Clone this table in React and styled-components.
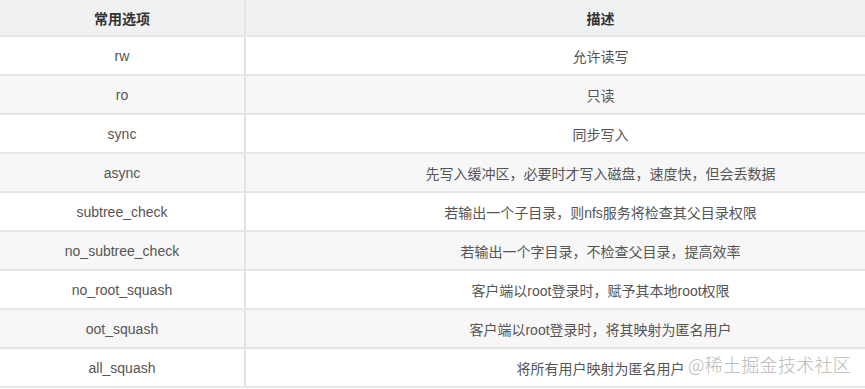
import React from "react";
import styled, { createGlobalStyle } from "styled-components";

const GlobalStyle = createGlobalStyle`
  html, body { margin: 0; padding: 0; background: #ffffff; }
  body { overflow: hidden; }
  * { box-sizing: border-box; }
`;

const Frame = styled.div`
  position: relative;
  width: 865px;
  height: 389px;
  overflow: hidden;
  background: #ffffff;
  font-family: "Liberation Sans", Arial, "Noto Sans CJK SC", sans-serif;
`;

const Table = styled.div`
  width: 955px;
  display: flex;
  flex-direction: column;
`;

const Row = styled.div`
  display: grid;
  grid-template-columns: 246px 709px;
  height: ${(p) => (p.$head ? "37px" : "39px")};
  background: ${(p) => (p.$head ? "#eff1f3" : p.$striped ? "#f7f7f7" : "#ffffff")};
  border-bottom: 2px solid #e6e6e6;
`;

const Cell = styled.div`
  display: flex;
  align-items: center;
  justify-content: center;
  font-size: 14px;
  color: ${(p) => (p.$head ? "#333333" : "#555555")};
  font-weight: ${(p) => (p.$head ? 700 : 400)};
  border-right: ${(p) => (p.$first ? "2px solid #e3e3e3" : "none")};
  padding-top: 1px;
  white-space: nowrap;
`;

const Watermark = styled.div`
  position: absolute;
  left: 688px;
  top: 352px;
  font-family: "Noto Sans CJK SC", sans-serif;
  font-size: 18px;
  font-weight: 300;
  color: #b9b9b9;
  letter-spacing: 0.3px;
  white-space: nowrap;
  line-height: 24px;
`;

const rows = [
  ["rw", "允许读写"],
  ["ro", "只读"],
  ["sync", "同步写入"],
  ["async", "先写入缓冲区，必要时才写入磁盘，速度快，但会丢数据"],
  ["subtree_check", "若输出一个子目录，则nfs服务将检查其父目录权限"],
  ["no_subtree_check", "若输出一个字目录，不检查父目录，提高效率"],
  ["no_root_squash", "客户端以root登录时，赋予其本地root权限"],
  ["oot_squash", "客户端以root登录时，将其映射为匿名用户"],
  ["all_squash", "将所有用户映射为匿名用户"],
];

export default function App() {
  return (
    <Frame>
      <GlobalStyle />
      <Table>
        <Row $head>
          <Cell $head $first>常用选项</Cell>
          <Cell $head>描述</Cell>
        </Row>
        {rows.map(([opt, desc], i) => (
          <Row key={opt} $striped={i % 2 === 1}>
            <Cell $first>{opt}</Cell>
            <Cell>{desc}</Cell>
          </Row>
        ))}
      </Table>
      <Watermark>@稀土掘金技术社区</Watermark>
    </Frame>
  );
}
